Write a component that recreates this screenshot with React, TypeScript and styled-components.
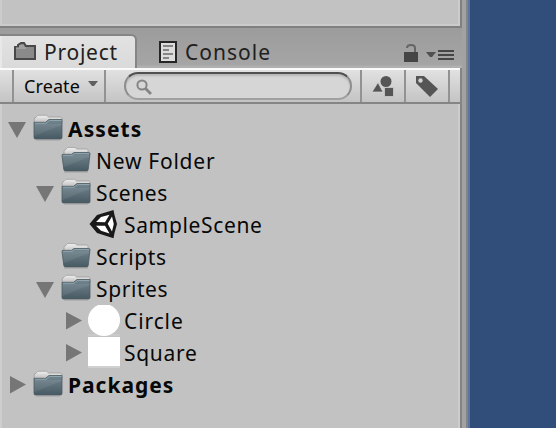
import React from "react";
import styled, { createGlobalStyle } from "styled-components";

const Global = createGlobalStyle`
  * { box-sizing: border-box; }
  body { margin: 0; overflow: hidden; font-family: "Noto Sans", "Open Sans", sans-serif; color: #0a0a0a; }
  svg { display: block; flex: none; }
`;

const Screen = styled.div`
  display: flex;
  width: 556px;
  height: 428px;
  background: #314d79;
`;
const Dock = styled.div`
  display: flex;
  flex-direction: column;
  width: 470px;
  height: 428px;
  padding-right: 4px;
  background: #a2a2a2;
  border-right: 2px solid #5b769e;
  box-shadow: inset -2px 0 #848484;
`;
const UpperPanel = styled.div`
  width: 462px;
  height: 28px;
  background: #c2c2c2;
  border: solid #808080;
  border-width: 0 2px 2px 0;
  box-shadow: inset -2px -2px #cccccc, inset 2px 0 #cbcbcb;
`;
const TabStrip = styled.div`
  display: flex;
  align-items: flex-end;
  width: 462px;
  height: 40px;
  background: linear-gradient(#9c9c9c, #a5a5a5 37px, #b0b0b0 38px);
`;
const Tab = styled.div<{ $active?: boolean }>`
  display: flex;
  align-items: center;
  height: 34px;
  width: ${(p) => (p.$active ? 137 : 155)}px;
  padding-left: ${(p) => (p.$active ? 14 : 22)}px;
  border: solid ${(p) => (p.$active ? "#858585" : "transparent")};
  border-width: 2px 2px 0 0;
  border-radius: 0 6px 0 0;
  background: ${(p) => (p.$active ? "linear-gradient(#e2e2e2, #dadada)" : "none")};
  box-shadow: ${(p) => (p.$active ? "inset 2px 0 #e8e8e8" : "none")};
`;
const Label = styled.span<{ $size?: number; $spacing?: number; $bold?: boolean; $gap?: number; $tone?: string }>`
  font-size: ${(p) => p.$size ?? 21}px;
  font-weight: ${(p) => (p.$bold ? 700 : 400)};
  letter-spacing: ${(p) => p.$spacing ?? 0}px;
  margin-left: ${(p) => p.$gap ?? 0}px;
  color: ${(p) => p.$tone ?? "#080808"};
  line-height: 30px;
  white-space: nowrap;
`;
const TabTools = styled.div`
  display: flex;
  gap: 8px;
  margin-left: 112px;
  height: 32px;
  padding-top: 8px;
`;
const Toolbar = styled.div`
  display: flex;
  width: 462px;
  height: 36px;
  background: linear-gradient(#fafafa 2px, #e1e1e1 2px, #c4c4c4);
  border: solid #858585;
  border-width: 0 2px 2px 0;
`;
const Cell = styled.div<{ $w: number; $divided?: boolean; $pad?: number }>`
  display: flex;
  align-items: center;
  width: ${(p) => p.$w}px;
  height: 32px;
  margin-top: 2px;
  padding-left: ${(p) => p.$pad ?? 0}px;
  border-right: ${(p) => (p.$divided ? "2px solid #929292" : "none")};
`;
const DropArrow = styled.svg`
  margin: -4px 0 0 8px;
`;
const Search = styled.div`
  display: flex;
  width: 228px;
  height: 28px;
  padding: 5px 0 0 10px;
  border: 2px solid;
  border-color: #505050 #8d8d8d #a0a0a0;
  border-radius: 14px;
  background: #d6d6d6;
  box-shadow: inset 0 2px 2px #b8b8b8;
`;
const Tree = styled.div`
  flex: 1;
  width: 462px;
  padding-top: 9px;
  background: #c2c2c2;
  border-right: 2px solid #848484;
  box-shadow: inset 2px 0 #cecece, inset -2px 0 #cccccc;
`;
const Row = styled.div<{ $depth: number }>`
  display: flex;
  align-items: center;
  height: 32px;
  padding-left: ${(p) => 4 + p.$depth * 28}px;
`;
const IconSlot = styled.div`
  width: 32px;
  height: 32px;
`;
const ArrowSlot = styled.div`
  width: 28px;
  height: 32px;
`;

const Arrow = ({ open }: { open: boolean }) => (
  <svg width="28" height="32">
    <path d={open ? "M4 9H22L13 25Z" : "M6 7L22 15.5L6 24.5Z"} fill="#767676" />
  </svg>
);

const Folder = ({ open }: { open?: boolean }) => (
  <svg width="32" height="32">
    <defs>
      <linearGradient id="slate" x2="0" y2="1">
        <stop stopColor="#748791" />
        <stop offset="1" stopColor="#475962" />
      </linearGradient>
      <linearGradient id="paper" x2="0" y2="1">
        <stop stopColor="#f0f0f0" />
        <stop offset="1" stopColor="#bababa" />
      </linearGradient>
    </defs>
    <path d={open ? "M4 12V6.5Q4 5 5.5 4.7L7.5 2.5H15L17 4H26.5Q28 4 28 5.5V12Z" : "M2.2 10V6Q2.2 4.5 4 4.3L6 2.3H14.5L16.5 4H28.5Q30 4 30 5.5V10Z"} fill="url(#paper)" stroke="#969696" strokeWidth=".7" />
    <path d={open ? "M2 10.5Q1.8 9.3 3 9.3H11.5L14 7.5H28.8Q30.2 7.5 30 9L28.2 24.5Q28 26 26.7 26H5.5Q4 26 3.8 24.5Z" : "M2 9.3H13.5L17 6.5H30V24.5Q30 26 28.5 26H3.5Q2 26 2 24.5Z"} fill="url(#slate)" stroke="#4b5a62" strokeWidth=".8" />
    <path d={open ? "M3 10.3H12L14.5 8.5H29" : "M3 10.3H14L17.5 7.5H29.5"} fill="none" stroke="#8fa4ac" />
    <path d={open ? "M2.5 11L29 9.5L28.8 12L4 22Z" : "M2.5 11H29.5V12L2.5 23Z"} fill="#fff" opacity=".07" />
    <path d="M4 27H28" stroke="#929292" opacity=".7" />
  </svg>
);

const UnityMark = () => (
  <svg width="32" height="32">
    <path d="M1.5 15L9 6L25.5 1L26.5 6L29 15L26.5 24L25.5 29.3L9 24Z" fill="#191919" />
    <path d="M8 13L13 8L21.5 5.8L17 13.3ZM19.7 14.8L24 7.5L25.8 15L24 22.5ZM8 16.8H17L21.5 24.4L13 21.8Z" fill="#fff" />
  </svg>
);
const CircleSprite = () => (
  <svg width="32" height="32"><rect y="29" width="32" height="2" fill="#c9c9c9" /><circle cx="16" cy="15" r="16" fill="#fff" /></svg>
);
const SquareSprite = () => (
  <svg width="32" height="32"><path d="M0 -1H32V29H0Z" fill="#fff" /><path d="M0 29H32V31H0Z" fill="#d0d0d0" /></svg>
);

type Kind = "folder" | "folderOpen" | "scene" | "circle" | "square";
const icons: Record<Kind, React.ReactNode> = {
  folder: <Folder />,
  folderOpen: <Folder open />,
  scene: <UnityMark />,
  circle: <CircleSprite />,
  square: <SquareSprite />,
};
const items: { name: string; depth: number; kind: Kind; open?: boolean; bold?: boolean; spacing: number }[] = [
  { name: "Assets", depth: 0, kind: "folder", open: true, bold: true, spacing: 1.1 },
  { name: "New Folder", depth: 1, kind: "folderOpen", spacing: 0.75 },
  { name: "Scenes", depth: 1, kind: "folder", open: true, spacing: 0.6 },
  { name: "SampleScene", depth: 2, kind: "scene", spacing: 0.65 },
  { name: "Scripts", depth: 1, kind: "folderOpen", spacing: 0.65 },
  { name: "Sprites", depth: 1, kind: "folder", open: true, spacing: 0.6 },
  { name: "Circle", depth: 2, kind: "circle", open: false, spacing: 0.9 },
  { name: "Square", depth: 2, kind: "square", open: false, spacing: 0.7 },
  { name: "Packages", depth: 0, kind: "folder", open: false, bold: true, spacing: 1 },
];

export default function App() {
  return (
    <>
      <Global />
      <Screen>
        <Dock>
          <UpperPanel />
          <TabStrip>
            <Tab $active>
              <svg width="22" height="20">
                <path d="M1 5H4V3L7 1H10L12 4H21V17H1Z" fill="#8a8a8a" stroke="#484848" strokeWidth="2" />
                <path d="M2 6H12M5 4H10" stroke="#b5b5b5" />
              </svg>
              <Label $gap={8} $spacing={0.75} $tone="#202020">Project</Label>
            </Tab>
            <Tab>
              <svg width="18" height="22">
                <path d="M1 1H17V21H1Z" fill="#dcdcdc" stroke="#262626" strokeWidth="2" />
                <path d="M4 5H14M4 9H10M4 13H14M4 17H10" stroke="#858585" strokeWidth="2" />
              </svg>
              <Label $gap={8} $spacing={1} $tone="#202020">Console</Label>
            </Tab>
            <TabTools>
              <svg width="14" height="20">
                <path d="M0 8H14V18H0Z" fill="#454545" />
                <path d="M3 4Q3 1 7 1Q11 1 11 4V8" fill="none" stroke="#656565" strokeWidth="2" />
              </svg>
              <svg width="28" height="20">
                <path d="M0 8H10L6 13H4Z" fill="#505050" />
                <path d="M12 7H28M12 11H28M12 15H28" stroke="#454545" strokeWidth="2" />
              </svg>
            </TabTools>
          </TabStrip>
          <Toolbar>
            <Cell $w={14} $divided />
            <Cell $w={92} $divided $pad={10}>
              <Label $size={18} $spacing={0.1}>Create</Label>
              <DropArrow width="10" height="12"><path d="M0 3H10L6 8H4Z" fill="#606060" /></DropArrow>
            </Cell>
            <Cell $w={256} $divided $pad={18}>
              <Search>
                <svg width="18" height="18">
                  <circle cx="6" cy="6" r="4.6" fill="none" stroke="#858585" strokeWidth="2" />
                  <path d="M9.5 9.5L15 15" stroke="#858585" strokeWidth="2.8" />
                </svg>
              </Search>
            </Cell>
            <Cell $w={44} $divided $pad={9}>
              <svg width="24" height="24">
                <circle cx="15" cy="7.5" r="5.5" fill="#555" />
                <path d="M7 8.5L12 18H1ZM13.5 13.5H22.5V22.5H13.5Z" fill="#555" stroke="#d5d5d5" strokeWidth=".7" />
              </svg>
            </Cell>
            <Cell $w={44} $divided $pad={9}>
              <svg width="24" height="24">
                <path d="M1 2H9L23 15L15 23L1 9Z" fill="#555" />
                <circle cx="5.5" cy="6.5" r="2.2" fill="#d2d2d2" />
              </svg>
            </Cell>
          </Toolbar>
          <Tree>
            {items.map((it) => (
              <Row key={it.name} $depth={it.depth}>
                <ArrowSlot>{it.open !== undefined && <Arrow open={it.open} />}</ArrowSlot>
                <IconSlot>{icons[it.kind]}</IconSlot>
                <Label $bold={it.bold} $gap={4} $spacing={it.spacing}>{it.name}</Label>
              </Row>
            ))}
          </Tree>
        </Dock>
      </Screen>
    </>
  );
}
